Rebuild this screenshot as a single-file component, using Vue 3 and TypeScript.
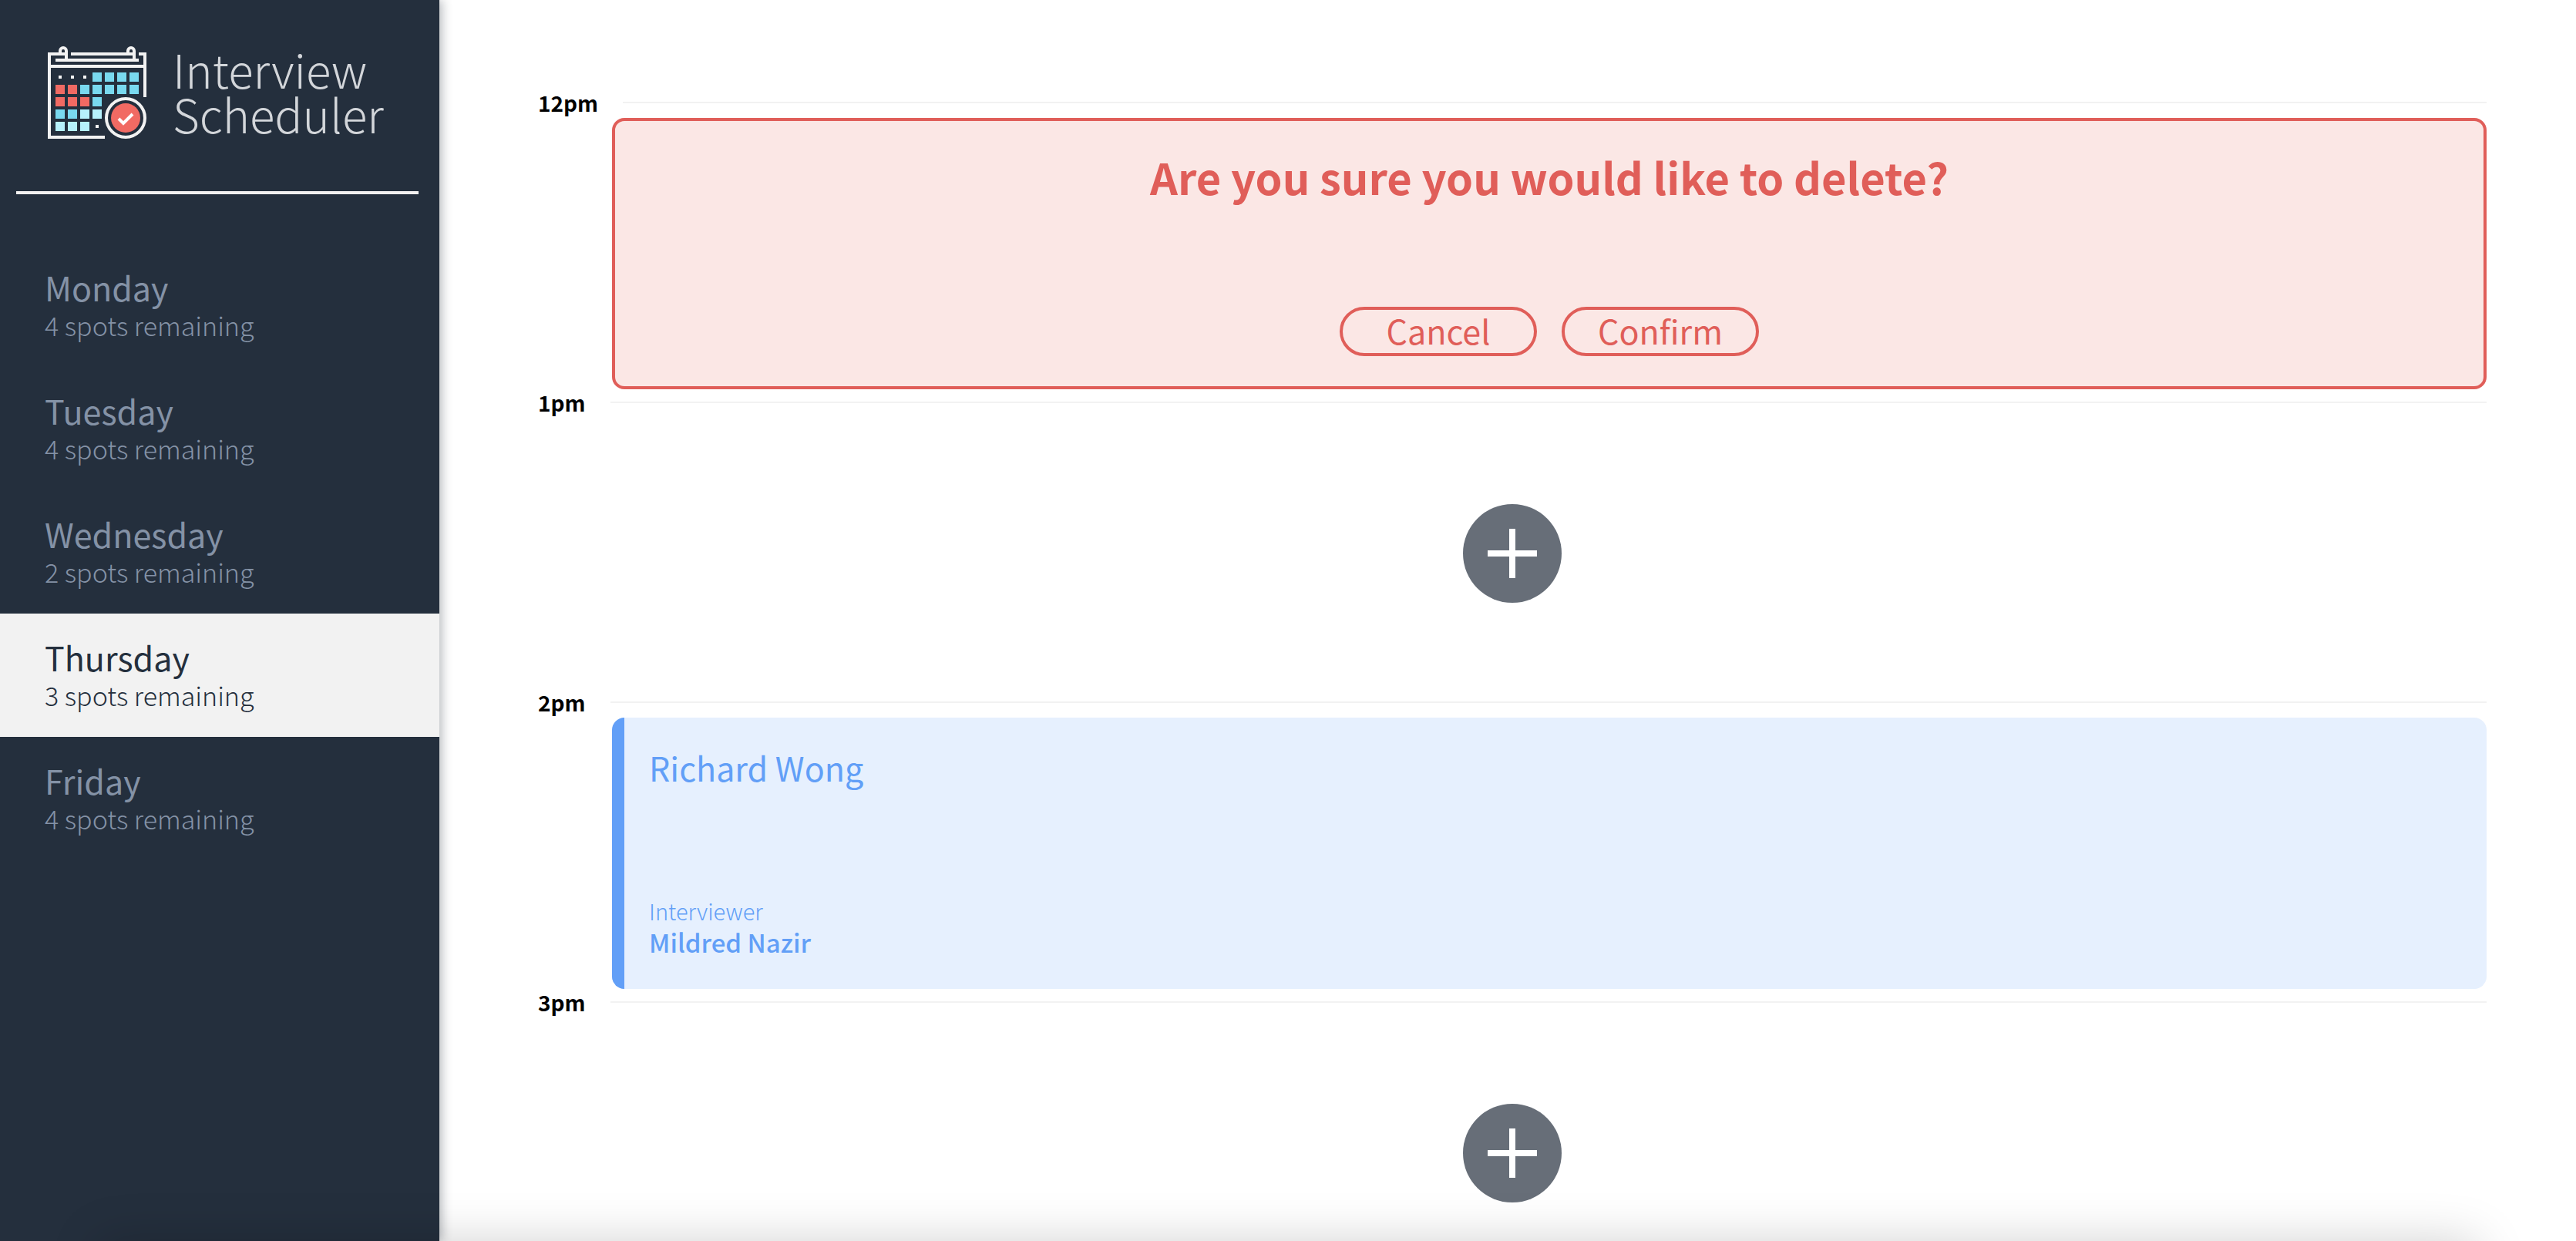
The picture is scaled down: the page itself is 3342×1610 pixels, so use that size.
<script setup lang="ts">
import { ref } from 'vue'

interface Day {
  name: string
  spots: number
}

interface Appointment {
  time: string
  mode: 'confirm' | 'show' | 'empty'
  student?: string
  interviewer?: string
}

const days: Day[] = [
  { name: 'Monday', spots: 4 },
  { name: 'Tuesday', spots: 4 },
  { name: 'Wednesday', spots: 2 },
  { name: 'Thursday', spots: 3 },
  { name: 'Friday', spots: 4 },
]

const selected = ref('Thursday')

const appointments: Appointment[] = [
  { time: '12pm', mode: 'confirm' },
  { time: '1pm', mode: 'empty' },
  { time: '2pm', mode: 'show', student: 'Richard Wong', interviewer: 'Mildred Nazir' },
  { time: '3pm', mode: 'empty' },
]

// One string per calendar row: d = dot, b = blue, r = red, l = light blue
const fills: Record<string, string> = { b: '#79d9ef', r: '#f16a63', l: '#b6f1fc' }
const rows = ['dddbbbb', 'rrbbbbb', 'rrrb', 'bbll', 'llld']
const cells = rows.flatMap((row, r) =>
  [...row].map((kind, c) => {
    const size = kind === 'd' ? 4 : 12
    return { x: 16 + c * 16 - size / 2, y: 40 + r * 16 - size / 2, size, fill: fills[kind] ?? '#f6f6f6' }
  }),
)
</script>

<template>
  <div class="layout">
    <aside class="sidebar">
      <div class="brand">
        <svg class="brand-icon" viewBox="0 0 128 120" aria-hidden="true">
          <g fill="none" stroke="#f2f2f2" stroke-width="4">
            <path d="M74 118H2V10H24M16 10V6a4 4 0 0 1 8 0V18" />
            <path d="M30 10H112M104 10V6a4 4 0 0 1 8 0V18" />
            <path d="M10 18H118M2 26H126M118 10H126V66" />
            <circle cx="101" cy="93" r="25" />
          </g>
          <rect
            v-for="(cell, i) in cells"
            :key="i"
            :x="cell.x"
            :y="cell.y"
            :width="cell.size"
            :height="cell.size"
            :fill="cell.fill"
          />
          <circle cx="101" cy="93" r="19" fill="#f16a63" />
          <path d="M92 94l6 6 12-12" fill="none" stroke="#fff" stroke-width="4" />
        </svg>
        <div class="brand-name">Interview<br />Scheduler</div>
      </div>
      <hr class="separator" />
      <nav>
        <ul class="days">
          <li v-for="day in days" :key="day.name">
            <button
              type="button"
              class="day"
              :class="{ selected: day.name === selected }"
              @click="selected = day.name"
            >
              <span class="day-name">{{ day.name }}</span>
              <span class="day-spots">{{ day.spots }} spots remaining</span>
            </button>
          </li>
        </ul>
      </nav>
    </aside>

    <main class="schedule">
      <article v-for="item in appointments" :key="item.time" class="appointment">
        <header class="hour">
          <h4 class="hour-label">{{ item.time }}</h4>
          <hr class="hour-line" />
        </header>

        <section v-if="item.mode === 'confirm'" class="card card-confirm">
          <h1 class="question">Are you sure you would like to delete?</h1>
          <div class="actions">
            <button type="button" class="danger">Cancel</button>
            <button type="button" class="danger">Confirm</button>
          </div>
        </section>

        <section v-else-if="item.mode === 'show'" class="card card-show">
          <h2 class="student">{{ item.student }}</h2>
          <div>
            <h4 class="role">Interviewer</h4>
            <h3 class="interviewer">{{ item.interviewer }}</h3>
          </div>
        </section>

        <section v-else class="empty">
          <button type="button" class="add" aria-label="Add appointment">
            <svg viewBox="0 0 128 128" aria-hidden="true">
              <circle cx="64" cy="64" r="64" fill="#676e78" />
              <path d="M64 32V96M32 64H96" stroke="#fff" stroke-width="8" />
            </svg>
          </button>
        </section>
      </article>
    </main>
    <div class="bottom-shade"></div>
  </div>
</template>

<style>
body {
  margin: 0;
  background: #fff;
}
</style>

<style scoped>
.layout {
  display: flex;
  height: 100vh;
  overflow: hidden;
  font-family: 'Noto Sans CJK SC', 'Noto Sans', sans-serif;
}

h1,
h2,
h3,
h4,
ul {
  margin: 0;
  padding: 0;
}

button {
  font: inherit;
  cursor: pointer;
}

.sidebar {
  flex: 0 0 570px;
  z-index: 1;
  background: #242f3d;
  box-shadow: 4px 0 12px rgba(36, 47, 61, 0.3);
}

.brand {
  display: flex;
  gap: 34px;
  padding: 60px 0 68px 62px;
}

.brand-icon {
  width: 128px;
  height: 120px;
}

.brand-name {
  height: 120px;
  color: #d3d6da;
  font-size: 60px;
  font-weight: 300;
  line-height: 58px;
}

.separator {
  height: 4px;
  margin: 0 27px 64px 21px;
  border: 0;
  background: #f2f0f0;
}

.days {
  list-style: none;
}

.day {
  display: block;
  width: 100%;
  padding: 32px 58px 28px;
  border: 0;
  background: transparent;
  color: #8492a6;
  text-align: left;
}

.day.selected {
  background: #f2f2f2;
  color: #242f3d;
}

.day-name,
.day-spots {
  display: block;
}

.day-name {
  font-size: 43px;
  line-height: 48px;
}

.day-spots {
  font-size: 34px;
  font-weight: 300;
  line-height: 52px;
}

.schedule {
  flex: 1;
  min-width: 0;
  padding: 116px 116px 0 128px;
  overflow-y: auto;
  scrollbar-width: none;
}

.hour {
  display: flex;
  align-items: center;
  gap: 32px;
  height: 34px;
  margin-bottom: 3px;
}

.hour-label {
  color: #000;
  font-size: 28px;
  font-weight: 700;
  line-height: 34px;
}

.hour-line {
  flex: 1;
  height: 2px;
  margin: 0;
  border: 0;
  background: #f2f2f2;
}

.card,
.empty {
  box-sizing: border-box;
  display: flex;
  height: 352px;
}

.card {
  flex-direction: column;
  justify-content: space-between;
  margin-left: 96px;
  padding: 32px 32px 39px;
  border-radius: 16px;
}

.card-confirm {
  align-items: center;
  border: 4px solid #e05e59;
  background: #fbe7e5;
  color: #e05e59;
}

.question {
  font-size: 56px;
  font-weight: 700;
  line-height: 80px;
}

.actions {
  display: flex;
  gap: 32px;
}

.danger {
  box-sizing: border-box;
  width: 256px;
  height: 64px;
  padding: 0 0 4px;
  border: 4px solid #e05e59;
  border-radius: 32px;
  background: transparent;
  color: #e05e59;
  font-size: 43px;
  line-height: 52px;
}

.card-show {
  border-left: 16px solid #629ff7;
  background: #e6f0fe;
  color: #629ff7;
}

.student {
  font-size: 43px;
  font-weight: 400;
  line-height: 64px;
}

.role {
  font-size: 29px;
  font-weight: 300;
  line-height: 38px;
}

.interviewer {
  font-size: 33px;
  font-weight: 500;
  line-height: 44px;
}

.empty {
  align-items: center;
  justify-content: center;
}

.add {
  width: 128px;
  height: 128px;
  padding: 0;
  border: 0;
  border-radius: 50%;
  background: transparent;
}

.add svg {
  display: block;
}

.bottom-shade {
  position: fixed;
  z-index: 2;
  right: 128px;
  bottom: -128px;
  left: 128px;
  height: 128px;
  box-shadow: 0 0 64px rgba(0, 0, 0, 0.18);
  pointer-events: none;
}
</style>
